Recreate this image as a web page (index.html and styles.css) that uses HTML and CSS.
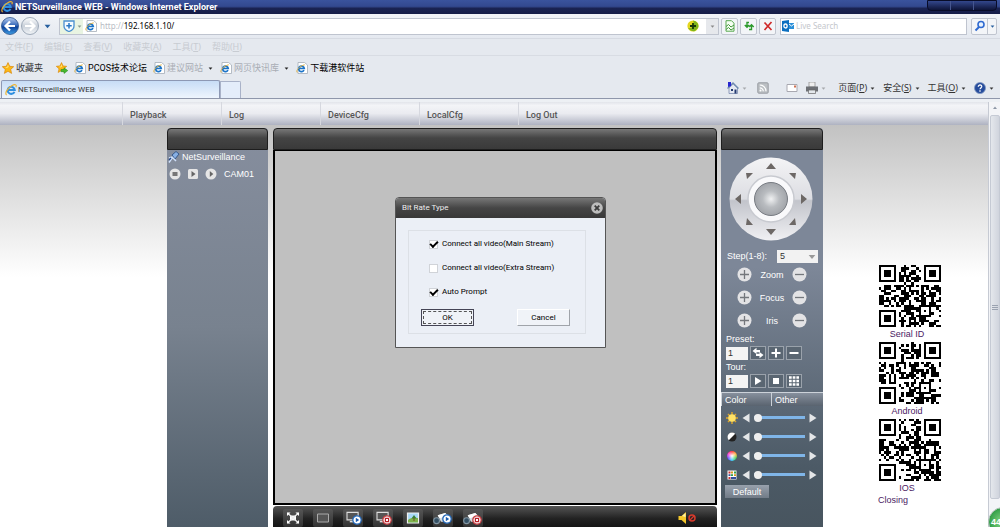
FILE: index.html
```html
<!DOCTYPE html>
<html lang="zh-CN">
<head>
<meta charset="utf-8">
<title>NETSurveillance WEB</title>
<link rel="stylesheet" href="styles.css">
</head>
<body>
<svg class="defs" aria-hidden="true">
  <defs>
    <linearGradient id="g-blue" x1="0" y1="0" x2="0" y2="1"><stop offset="0" stop-color="#b9cdf0"/><stop offset=".5" stop-color="#2a5fb4"/><stop offset=".55" stop-color="#0c3f98"/><stop offset="1" stop-color="#3fa0e6"/></linearGradient>
    <linearGradient id="g-pale" x1="0" y1="0" x2="0" y2="1"><stop offset="0" stop-color="#fff"/><stop offset=".5" stop-color="#c9d0da"/><stop offset="1" stop-color="#f2f5f8"/></linearGradient>
    <linearGradient id="g-ring" x1="0" y1="0" x2="0" y2="1"><stop offset="0" stop-color="#f4f4f6"/><stop offset=".5" stop-color="#dcdde2"/><stop offset=".52" stop-color="#c2c4cb"/><stop offset="1" stop-color="#f0f0f3"/></linearGradient>
    <radialGradient id="g-ball"><stop offset="0" stop-color="#f0f1f2"/><stop offset=".5" stop-color="#b9bcc0"/><stop offset="1" stop-color="#a2a5aa"/></radialGradient>
    <radialGradient id="g-green"><stop offset="0" stop-color="#8fdc8c"/><stop offset="1" stop-color="#2f9c45"/></radialGradient>
    <symbol id="ie" viewBox="0 0 16 16"><path d="M12.6 10.4A4.7 4.7 0 1 1 13 8H4.5" fill="none" stroke="#2f8fe0" stroke-width="2.7"/><path d="M2.2 14.6C-1 13 3.500 5 9 2.300 13-.2 16.300.5 14.500 4.200" fill="none" stroke="#eeb42f" stroke-width="1.500"/></symbol>
    <symbol id="iepage" viewBox="0 0 12 12"><path d="M2 .5h6.500L11.500 3v8.500H2z" fill="#fff" stroke="#a5adb8" stroke-width=".8"/><path d="M8 8.200A2.800 2.800 0 1 1 8.300 6.500H3.500" fill="none" stroke="#1c74c8" stroke-width="1.700"/><path d="M1.300 10.500C-.5 9 3 4 8.700 2.800" fill="none" stroke="#e0b040"/></symbol>
    <symbol id="star" viewBox="0 0 12 12"><path d="M6 .6 7.700 4.300l4 .4-3 2.700.9 4L6 9.300l-3.600 2.100.9-4-3-2.700 4-.4z" fill="#fdb813" stroke="#d8860b" stroke-width=".7"/><path d="M6 2.300 6.800 5 5 6 3 5.200 5.200 4.800z" fill="#ffe27a"/></symbol>
    <symbol id="down" viewBox="0 0 6 4"><path d="M.5.500h5L3 3.500z" fill="currentColor"/></symbol>
    <symbol id="left" viewBox="0 0 8 10"><path d="M7.500.500v9L.5 5z" fill="#e4e6e8"/></symbol>
    <symbol id="right" viewBox="0 0 8 10"><path d="M.5.500v9L7.500 5z" fill="#e4e6e8"/></symbol>
    <symbol id="plus" viewBox="0 0 15 15"><circle cx="7.500" cy="7.500" r="7" fill="#e3e3e5"/><path d="M3 7.500h9M7.500 3v9" stroke="#74777c" stroke-width="1.300"/></symbol>
    <symbol id="minus" viewBox="0 0 15 15"><circle cx="7.500" cy="7.500" r="7" fill="#e3e3e5"/><path d="M3 7.500h9" stroke="#74777c" stroke-width="1.300"/></symbol>
    <symbol id="playdot" viewBox="0 0 10 10"><circle cx="5" cy="5" r="4.200" fill="#fff" stroke="#2468b8" stroke-width="1.300"/><path d="M3.800 2.800v4.400L7.200 5z" fill="#1b5db0"/></symbol>
    <symbol id="stopdot" viewBox="0 0 10 10"><circle cx="5" cy="5" r="4.200" fill="#fff" stroke="#c43c40" stroke-width="1.300"/><path d="M3.400 3.400h3.200v3.200H3.400z" fill="#fff" stroke="#b82028" stroke-width="1.200"/></symbol>
    <symbol id="screen" viewBox="0 0 16 14"><path d="M1 1.500h12v8H1z" fill="#555" stroke="#ddd" stroke-width="1.200"/><path d="M4 11.500h7" stroke="#ddd" stroke-width="1.500"/></symbol>
    <symbol id="cam" viewBox="0 0 16 12"><path d="M4 3 11 1l4 4-2 4H7z" fill="#d5dbe0"/><path d="M4 3 11 1l2 2-7 3z" fill="#fff"/><circle cx="3" cy="8" r="2.700" fill="#345064" stroke="#8295a2"/></symbol>
  </defs>
</svg>

<header class="titlebar">
  <svg class="i12"><use href="#ie"/></svg><span class="title">NETSurveillance WEB - Windows Internet Explorer</span>
  <span class="winbtns"><button aria-label="Minimize"></button><button aria-label="Maximize"></button><button aria-label="Close window"></button></span>
</header>

<form class="addressbar">
  <button type="button" class="bare" aria-label="Back"><svg class="i18" viewBox="0 0 18 18"><circle cx="9" cy="9" r="8.500" fill="url(#g-blue)" stroke="#28508c" stroke-width=".8"/><path d="M9 4.500 4.500 9 9 13.500M5 9h9" fill="none" stroke="#fff" stroke-width="2.200"/></svg></button>
  <button type="button" class="bare" aria-label="Forward"><svg class="i18" viewBox="0 0 18 18"><circle cx="9" cy="9" r="8.500" fill="url(#g-pale)" stroke="#8a98aa" stroke-width=".8"/><path d="m9 4.500 4.500 4.500L9 13.500M13 9H4" fill="none" stroke="#fff" stroke-width="2.200"/></svg></button>
  <button type="button" class="bare hist" aria-label="Recent pages"><svg class="tri"><use href="#down"/></svg></button>
  <div class="urlbox">
    <span class="shield"><svg class="i12" viewBox="0 0 12 12"><path d="M1 1h10v5c0 3-2 4.500-5 5.500C3 10.500 1 9 1 6z" fill="#f4fbff" stroke="#4a90d0" stroke-width="1.300"/><path d="M6 3v5.500M3.300 5.700h5.400" stroke="#2878c4" stroke-width="1.500"/></svg><svg class="caret"><use href="#down"/></svg></span>
    <svg class="i12"><use href="#iepage"/></svg>
    <label class="url"><span>http://</span><input aria-label="Address" value="192.168.1.10/"></label>
    <svg class="i12" viewBox="0 0 12 12"><circle cx="6" cy="6" r="5.600" fill="#e4d61f"/><path d="M6 .5a5.500 5.500 0 0 1 5 7.500L8 11C4 12 2 9 1 8c5 1 7-3 5-7.500z" fill="#7fb51d"/><path d="M6 3v6M3 6h6" stroke="#173809" stroke-width="1.800"/></svg>
    <button type="button" class="drop" aria-label="Show addresses"><svg class="caret"><use href="#down"/></svg></button>
  </div>
  <button type="button" class="tool" aria-label="Compatibility view"><svg class="i12" viewBox="0 0 12 12"><path d="M2 .700h5.500l2.500 2.500v8H2z" fill="#f5fff2" stroke="#58a850"/><path d="M2 6.500 4.500 4.500 7 7l3-2M2 9.500l2.500-2L7 10l3-2" stroke="#42953c" fill="none"/></svg></button>
  <button type="button" class="tool" aria-label="Refresh"><svg class="i12" viewBox="0 0 12 12"><path d="M6 2.500H4V7M1.800 5 4 7.300 6.200 5M6 9.500h2.500V5M6.300 7 8.500 4.700 10.700 7" fill="none" stroke="#2b9a2b" stroke-width="1.400"/></svg></button>
  <button type="button" class="tool" aria-label="Stop loading"><svg class="i12" viewBox="0 0 12 12"><path d="m2.500 2.500 7 7.500M9.500 2l-7 8" stroke="#cf2a2a" stroke-width="1.700"/></svg></button>
  <div class="searchbox">
    <svg class="i12" viewBox="0 0 12 12"><path d="M0 1 7 0v12L0 11z" fill="#0b6fc0"/><path d="M7 3h5v6H7z" fill="#2b8fd8"/><path d="m7 4 2.500 2L12 4" fill="none" stroke="#fff"/><ellipse cx="3.500" cy="6" rx="1.600" ry="2" fill="none" stroke="#fff" stroke-width="1.300"/></svg>
    <input aria-label="Search" placeholder="Live Search">
  </div>
  <span class="go"><button type="button" aria-label="Search"><svg class="i12" viewBox="0 0 12 12"><circle cx="7" cy="4.500" r="3" fill="#e9f3ff" stroke="#2f6ad0" stroke-width="1.600"/><path d="M5 7 1.500 10.500" stroke="#2f6ad0" stroke-width="2"/></svg></button><button type="button" aria-label="Search options"><svg class="caret"><use href="#down"/></svg></button></span>
</form>

<nav class="menubar"><a href="#">文件(<u>F</u>)</a><a href="#">编辑(<u>E</u>)</a><a href="#">查看(<u>V</u>)</a><a href="#">收藏夹(<u>A</u>)</a><a href="#">工具(<u>T</u>)</a><a href="#">帮助(<u>H</u>)</a></nav>

<nav class="favbar">
  <a href="#" class="favs"><svg class="i12"><use href="#star"/></svg>收藏夹</a>
  <a href="#" aria-label="Add favorite"><svg class="i12" viewBox="0 0 12 12"><use href="#star" width="11" height="11"/><path d="M5 7.500h3V5.800L11.800 8.600 8 11.500V9.700H5z" fill="#48b82f" stroke="#1d8a1d" stroke-width=".5"/></svg></a>
  <a href="#" class="on"><svg class="i12"><use href="#iepage"/></svg>PCOS技术论坛</a>
  <a href="#" class="dim"><svg class="i12"><use href="#iepage"/></svg>建议网站<svg class="caret"><use href="#down"/></svg></a>
  <a href="#" class="dim"><svg class="i12"><use href="#iepage"/></svg>网页快讯库<svg class="caret"><use href="#down"/></svg></a>
  <a href="#" class="on"><svg class="i12"><use href="#iepage"/></svg>下载港软件站</a>
</nav>

<div class="tabrow">
  <a href="#" class="tab"><svg class="i12"><use href="#ie"/></svg>NETSurveillance WEB</a>
  <button class="newtab" aria-label="New tab"></button>
  <div class="commands">
    <button aria-label="Home"><svg class="i12" viewBox="0 0 12 12"><path d="M2 6v5.500h8.500V6L6.200 2z" fill="#e5e9f2" stroke="#6d7fa8" stroke-width=".7"/><path d="M.5 6.500 6 1l5.500 5.500" fill="none" stroke="#6f8ab0" stroke-width="1.300"/><path d="M1 0h3v4L1 5z" fill="#2626d0"/><path d="M4 7h2v2H4zM7.500 7.500h2v4h-2z" fill="#243a70"/></svg><svg class="caret pale"><use href="#down"/></svg></button>
    <button aria-label="Feeds" class="feeds"><svg class="i12" viewBox="0 0 12 12"><rect x=".8" y=".8" width="10.400" height="10.400" rx="1" fill="#bcc0c4" stroke="#989ca2"/><path d="M2.800 5.800a3.500 3.500 0 0 1 3.500 3.500M2.800 3a6.200 6.200 0 0 1 6.200 6.300" fill="none" stroke="#fff" stroke-width="1.200"/><circle cx="3.500" cy="8.600" r="1" fill="#fff"/></svg></button>
    <button aria-label="Mail" class="mail"><svg class="i12" viewBox="0 0 12 12"><path d="M1 2.500h10v7H1z" fill="#fff" stroke="#a8a8b0"/><path d="M8 3.500h2v2H8z" fill="#d07050"/></svg></button>
    <button aria-label="Print" class="print"><svg class="i12" viewBox="0 0 12 12"><path d="M3 0h6v5H3z" fill="#eee" stroke="#888" stroke-width=".7"/><path d="M0 4.500h12v5H0z" fill="#6d7075"/><path d="M2.500 8h7v3.500h-7z" fill="#e4e8ec" stroke="#666" stroke-width=".7"/></svg><svg class="caret pale"><use href="#down"/></svg></button>
    <button><span>页面(<u>P</u>)</span><svg class="caret"><use href="#down"/></svg></button>
    <button><span>安全(<u>S</u>)</span><svg class="caret"><use href="#down"/></svg></button>
    <button><span>工具(<u>O</u>)</span><svg class="caret"><use href="#down"/></svg></button>
    <button aria-label="Help"><svg class="i12" viewBox="0 0 12 12"><circle cx="6" cy="6" r="5.500" fill="#264c9c" stroke="#7d95c0" stroke-width=".8"/><path d="M4.300 4.700C4.300 2.300 8 2.500 7.700 4.700 7.500 5.900 6 6 6 7.300M6 8.300v1.400" fill="none" stroke="#fff" stroke-width="1.300"/></svg><svg class="caret"><use href="#down"/></svg></button>
  </div>
</div>

<div class="viewport">
  <div class="page">
    <nav class="sitenav"><a href="#">Playback</a><a href="#">Log</a><a href="#">DeviceCfg</a><a href="#">LocalCfg</a><a href="#">Log Out</a></nav>
    <main class="board">
      <section class="panel devices">
        <div class="cap"></div>
        <div class="root"><svg class="i12" viewBox="0 0 12 12"><path d="M4 4 8 .5l3 2.500-4 5z" fill="#88b0e4" stroke="#24487c" stroke-width=".8"/><path d="m1 7 3-1 4 4M4 7l-3 4.500" fill="none" stroke="#cfe0fa" stroke-width="1.500"/><path d="m1 9 2-2" stroke="#234688" stroke-width="1.500"/></svg>NetSurveillance</div>
        <div class="cam">
          <button class="bare" aria-label="Stop"><svg class="i12" viewBox="0 0 12 12"><circle cx="6" cy="6" r="5.500" fill="#e6e6e6"/><path d="M3.500 4h5v4h-5z" fill="#777"/></svg></button>
          <button class="bare" aria-label="Main stream"><svg class="i12" viewBox="0 0 12 12"><rect x="1" y="1" width="10" height="10" rx="1.500" fill="#e6e6e6"/><path d="M4.500 3v6L8.500 6z" fill="#666"/></svg></button>
          <button class="bare" aria-label="Extra stream"><svg class="i12" viewBox="0 0 12 12"><circle cx="6" cy="6" r="5.500" fill="#e6e6e6"/><path d="M4.800 3v6L8.300 6z" fill="#666"/></svg></button>
          <span>CAM01</span>
        </div>
      </section>

      <section class="center">
        <div class="cap"></div>
        <div class="video">
          <form class="dialog" role="dialog" aria-labelledby="dlg">
            <div class="dlghead"><span id="dlg">Bit Rate Type</span><button type="button" class="bare" aria-label="Close"><svg class="i12" viewBox="0 0 12 12"><circle cx="6" cy="6" r="5.800" fill="#bdbdbd"/><path d="m3.700 3.700 4.600 4.600m0-4.600L3.700 8.300" stroke="#3c3c3c" stroke-width="1.800"/></svg></button></div>
            <div class="dlgbody">
              <label><input type="checkbox" checked>Connect all video(Main Stream)</label>
              <label><input type="checkbox">Connect all video(Extra Stream)</label>
              <label><input type="checkbox" checked>Auto Prompt</label>
              <div class="actions"><button type="button" class="ok"><span>OK</span></button><button type="button">Cancel</button></div>
            </div>
          </form>
        </div>
        <div class="toolbar">
          <button aria-label="Full screen"><svg viewBox="0 0 20 18"><path d="M7 6.500h6v5H7z" fill="#fff"/><path d="m4.500 4 11 10M15.500 4l-11 10" stroke="#eee" stroke-width="1.300"/><path d="M4 3.500h3.500L4 7zM16 3.500h-3.500L16 7zM4 14.500h3.500L4 11zM16 14.500h-3.500L16 11z" fill="#fff"/></svg></button>
          <button aria-label="Single view"><svg viewBox="0 0 20 18"><path d="M4.500 5h11v8h-11z" fill="#555" stroke="#aaa"/></svg></button>
          <button aria-label="Play all"><svg viewBox="0 0 20 18"><use href="#screen" x="3" y="2" width="15" height="13"/><use href="#playdot" x="9" y="6" width="10" height="10"/></svg></button>
          <button aria-label="Stop all"><svg viewBox="0 0 20 18"><use href="#screen" x="3" y="2" width="15" height="13"/><use href="#stopdot" x="9" y="6" width="10" height="10"/></svg></button>
          <button aria-label="Snapshot"><svg viewBox="0 0 20 18"><path d="M4.500 4h11v10h-11z" fill="#a9d8f6" stroke="#f0f0f0" stroke-width="1.200"/><path d="M5 11c4-3 6-2 10-2v4.500H5z" fill="#7fb24b"/><path d="m11 6 2.500 3.500h-5z" fill="#3a7e32"/><path d="M10.500 9h1v3h-1z" fill="#6f5124"/></svg></button>
          <button aria-label="Start record"><svg viewBox="0 0 20 18"><use href="#cam" x="0" y="3" width="18" height="13"/><use href="#playdot" x="9" y="5" width="10" height="10"/></svg></button>
          <button aria-label="Stop record"><svg viewBox="0 0 20 18"><use href="#cam" x="0" y="3" width="18" height="13"/><use href="#stopdot" x="9" y="6" width="10" height="10"/></svg></button>
          <button aria-label="Sound off" class="sound"><svg viewBox="0 0 20 18"><path d="M1.500 7h3L9 3v12L4.500 11h-3z" fill="#f4c72a"/><path d="M5 7 8.500 4v4z" fill="#fff2a8"/><circle cx="15" cy="9" r="3" fill="none" stroke="#d83a2c" stroke-width="1.500"/><path d="m13 11 4-4" stroke="#d83a2c" stroke-width="1.300"/></svg></button>
        </div>
      </section>

      <section class="panel ptz">
        <div class="cap"></div>
        <svg class="wheel" viewBox="0 0 84 86"><circle cx="42" cy="43" r="41.500" fill="url(#g-ring)"/><circle cx="42" cy="43" r="23" fill="#f9f9fb" stroke="#c8cad0" stroke-width="1.500"/><circle cx="42" cy="43" r="16.500" fill="url(#g-ball)" stroke="#777b82"/><path d="m42 7 5 6H37zM42 79l5-6H37zM6 43l6-5v10zM78 43l-6-5v10zM17 17h7l-6 6zM67 17h-7l6 6zM17 69h7l-6-7zM67 69h-7l6-7z" fill="#6d6866"/></svg>
        <div class="step"><label for="step">Step(1-8):</label><span class="select"><select id="step"><option>5</option></select><svg class="caret"><use href="#down"/></svg></span></div>
        <div class="lens"><button class="bare" aria-label="Zoom in"><svg><use href="#plus"/></svg></button><span>Zoom</span><button class="bare" aria-label="Zoom out"><svg><use href="#minus"/></svg></button></div>
        <div class="lens"><button class="bare" aria-label="Focus in"><svg><use href="#plus"/></svg></button><span>Focus</span><button class="bare" aria-label="Focus out"><svg><use href="#minus"/></svg></button></div>
        <div class="lens"><button class="bare" aria-label="Iris open"><svg><use href="#plus"/></svg></button><span>Iris</span><button class="bare" aria-label="Iris close"><svg><use href="#minus"/></svg></button></div>
        <label class="name" for="preset">Preset:</label>
        <div class="numrow"><input id="preset" value="1">
          <button aria-label="Go to preset"><svg viewBox="0 0 14 12"><path d="M1.500 4 5.500.8V3H9v2.200H5.500V7zM12.500 8 8.500 11.200V9H5V6.800h3.500V5z" fill="#fff"/></svg></button>
          <button aria-label="Add preset"><svg viewBox="0 0 14 12"><path d="M7 1.500v9M2.500 6h9" stroke="#fff" stroke-width="2"/></svg></button>
          <button aria-label="Delete preset"><svg viewBox="0 0 14 12"><path d="M2.500 6h9" stroke="#fff" stroke-width="2"/></svg></button></div>
        <label class="name" for="tour">Tour:</label>
        <div class="numrow"><input id="tour" value="1">
          <button aria-label="Start tour"><svg viewBox="0 0 14 12"><path d="M4 2v8l6.500-4z" fill="#fff"/></svg></button>
          <button aria-label="Stop tour"><svg viewBox="0 0 14 12"><path d="M4 3h6v6H4z" fill="#fff"/></svg></button>
          <button aria-label="Edit tour"><svg viewBox="0 0 14 12"><path d="M2 2.500h10M2 6h10M2 9.500h10" stroke="#fff" stroke-width="2.500" stroke-dasharray="2.700 1"/></svg></button></div>
        <div class="ctabs"><button>Color</button><button>Other</button></div>
        <div class="adjust"><svg class="i12" viewBox="0 0 12 12"><path d="M6 0v12M0 6h12M2 2l8 8M10 2l-8 8" stroke="#d9a42e" stroke-width="1.500"/><circle cx="6" cy="6" r="3.800" fill="#ffe266"/></svg><button class="bare" aria-label="Less brightness"><svg><use href="#left"/></svg></button><input type="range" value="0" aria-label="Brightness"><button class="bare" aria-label="More brightness"><svg><use href="#right"/></svg></button></div>
        <div class="adjust"><svg class="i12" viewBox="0 0 12 12"><circle cx="6" cy="6" r="4.500" fill="#222"/><path d="M2.800 9.200A4.500 4.500 0 0 1 9.200 2.800z" fill="#fff"/></svg><button class="bare" aria-label="Less contrast"><svg><use href="#left"/></svg></button><input type="range" value="0" aria-label="Contrast"><button class="bare" aria-label="More contrast"><svg><use href="#right"/></svg></button></div>
        <div class="adjust"><span class="hue"></span><button class="bare" aria-label="Less saturation"><svg><use href="#left"/></svg></button><input type="range" value="0" aria-label="Saturation"><button class="bare" aria-label="More saturation"><svg><use href="#right"/></svg></button></div>
        <div class="adjust"><svg class="i12" viewBox="0 0 12 12"><path d="M1.500 1.500h9v9h-9z" fill="#fff"/><path d="M2.500 3.500h2M2.500 9h2" stroke="#c33" stroke-width="1.800"/><path d="M5 3.500h2M8 6.200h2" stroke="#d99a20" stroke-width="1.800"/><path d="M8 3.500h2M5 6.200h2" stroke="#35a04a" stroke-width="1.800"/><path d="M2.500 6.200h2M5 9h5" stroke="#334f9c" stroke-width="1.800"/></svg><button class="bare" aria-label="Less hue"><svg><use href="#left"/></svg></button><input type="range" value="0" aria-label="Hue"><button class="bare" aria-label="More hue"><svg><use href="#right"/></svg></button></div>
        <button class="default">Default</button>
      </section>

      <aside class="codes">
        <figure><svg class="qr" data-seed="11"></svg><figcaption><a href="#">Serial ID</a></figcaption></figure>
        <figure><svg class="qr" data-seed="29"></svg><figcaption><a href="#">Android</a></figcaption></figure>
        <figure><svg class="qr" data-seed="53"></svg><figcaption><a href="#">IOS</a></figcaption></figure>
        <a href="#" class="closing">Closing</a>
      </aside>
    </main>
  </div>
  <div class="scroll"><svg class="i12" viewBox="0 0 12 12"><path d="M4 7h4L6 4.500z" fill="#8d96a5"/></svg><div class="thumb"><i></i><i></i><i></i></div><svg class="badge" viewBox="0 0 30 30"><circle cx="15" cy="15" r="14.500" fill="url(#g-green)" stroke="#b8c4be"/><text x="3" y="18">44</text></svg></div>
</div>
<script src="qr.js"></script>
</body>
</html>
```
FILE: styles.css
```css
* { box-sizing: border-box; }
body { margin: 0; height: 100vh; display: flex; flex-direction: column; overflow: hidden; background: #e5e9ef; color: #222; font: 9px/12px "Noto Sans", "Noto Sans CJK SC", sans-serif; }
a { color: inherit; text-decoration: none; }
button, input, select { font: inherit; color: inherit; margin: 0; padding: 0; border: 0; border-radius: 0; outline: 0; min-width: 0; }
button { background: none; display: flex; align-items: center; justify-content: center; }
svg { display: block; flex: none; }
.defs { position: absolute; width: 0; height: 0; }
.i12 { width: 12px; height: 12px; }
.i18 { width: 18px; height: 18px; }
.caret { width: 5px; height: 3px; }
.pale { opacity: .35; }

.titlebar { height: 14px; flex: none; display: flex; align-items: center; gap: 2px; padding-left: 1px; background: linear-gradient(#3a539d, #33498f 45%, #1a2352 60%, #151c47); color: #fff; }
.title { font: bold 9px/12px Roboto, sans-serif; }
.winbtns { margin: 0 3px 0 auto; align-self: flex-start; display: flex; width: 70px; height: 11px; border: 1px solid #080c28; border-radius: 0 0 4px 4px; background: linear-gradient(#33478c, #0e1438); }
.winbtns button { flex: 1; border-right: 1px solid #46568f; }
.winbtns button:last-child { border: 0; }

.addressbar { height: 25px; flex: none; display: flex; align-items: center; gap: 2px; padding: 0 3px 0 1px; background: linear-gradient(#f1f3f7, #e5e9f0); border-bottom: 1px solid #d6dae2; }
.hist { width: 13px; color: #275f9e; }
.tri { width: 7px; height: 5px; }
.urlbox { flex: 1; display: flex; align-items: center; height: 17px; margin-left: 3px; background: #fff; border: 1px solid #bfc4cf; gap: 2px; font-size: 8px; }
.shield { display: flex; align-items: center; gap: 2px; width: 23px; height: 15px; padding-left: 3px; background: #e9f4e2; color: #8a9a90; }
.url { flex: 1; display: flex; margin-left: 1px; color: #b8bcc4; }
.url input { flex: 1; color: #000; background: none; }
.drop { width: 12px; height: 15px; margin-left: 5px; background: #e6e8ec; color: #888; }
.tool { width: 17px; height: 17px; border: 1px solid #c0c5cf; border-radius: 2px; background: #f3f5f8; }
.searchbox { width: 187px; height: 17px; margin-left: 2px; display: flex; align-items: center; gap: 2px; padding-left: 1px; background: #fff; border: 1px solid #bfc4cf; font-size: 8px; }
.searchbox input { flex: 1; background: none; }
.searchbox input::placeholder { color: #c4c7cc; opacity: 1; }
.go { display: flex; width: 26px; height: 17px; margin-left: 2px; border: 1px solid #c0c5cf; border-radius: 2px; background: #f3f5f8; color: #275f9e; }
.go button { width: 16px; }
.go button + button { width: 9px; border-left: 1px solid #c0c5cf; }

.menubar { height: 17px; flex: none; display: flex; gap: 11px; align-items: center; padding-left: 5px; color: #c8ccd2; border-bottom: 1px solid #d8dce3; }
.favbar { height: 24px; flex: none; display: flex; gap: 6px; align-items: center; padding-left: 2px; font-family: Roboto, "Noto Sans CJK SC", sans-serif; }
.favbar a { display: flex; align-items: center; gap: 2px; color: #333; }
.favbar .favs { margin-right: 7px; }
.favbar .on { color: #000; }
.favbar .dim { color: #a9adb5; }
.dim .caret { color: #222; margin: 0 1px 0 3px; }

.tabrow { height: 19px; flex: none; display: flex; align-items: flex-end; padding-left: 1px; border-bottom: 1px solid #8f97ab; }
.tab { width: 219px; height: 18px; display: flex; align-items: center; gap: 1px; padding-left: 3px; border: 1px solid #8d98b4; border-bottom: 0; border-radius: 2px 2px 0 0; background: linear-gradient(#c7dcf6, #eef5fd); font: 8px/12px Roboto, sans-serif; color: #333; }
.newtab { width: 21px; height: 17px; border: 1px solid #a9b2c8; border-bottom: 0; border-radius: 0 2px 0 0; background: #e4edfa; }
.commands { margin-left: auto; display: flex; align-items: center; gap: 8px; height: 20px; padding-right: 6px; color: #333; }
.commands button { gap: 3px; }
.feeds { margin-left: 2px; }
.mail { margin-left: 9px; }
.print { margin-right: 4px; }

.viewport { flex: 1; min-height: 0; display: flex; padding-top: 3px; background: #edf0f4; }
.page { flex: 1; min-width: 0; display: flex; flex-direction: column; background: linear-gradient(#c2c2c2, #c2c2c2 23px, #fff 175px); }
.sitenav { height: 23px; flex: none; display: flex; padding-left: 122px; background: linear-gradient(#e2e4ea, #f3f4f7 15%, #eaebf0 50%, #aeb2c1); font: 500 9px/26px Roboto, sans-serif; color: #555; }
.sitenav a { width: 99px; padding-left: 7px; border-left: 1px solid #d6d8df; }
.board { flex: 1; min-height: 0; display: grid; grid-template-columns: 101px minmax(0, 1fr) 102px 161px; column-gap: 4px; padding: 3px 0 0 167px; }
.cap { height: 22px; flex: none; border: 1px solid #1e1e1e; border-radius: 4px 4px 0 0; background: linear-gradient(#777, #444 45%, #3a3a3a); }
.panel { color: #fff; background: linear-gradient(#7d8798, #7d8798 35%, #4c5a66 85%, #48555f); font: 9px/12px "Liberation Sans", Arial, sans-serif; border-radius: 4px 4px 0 0; }
.bare { background: none; }
.devices { background: linear-gradient(#868e9e, #78828f 50%, #4e5c68); }
.root { display: flex; align-items: center; gap: 2px; padding: 1px; }
.cam { display: flex; align-items: center; gap: 6px; padding: 4px 2px; }
.cam span { margin-left: 1px; }

.center { display: flex; flex-direction: column; margin-left: 1px; }
.video { flex: 1; position: relative; border: 2px solid #000; border-top-width: 1px; background: #c0c0c0; }
.dialog { position: absolute; left: 120px; top: 46px; width: 211px; border: 1px solid #555; border-radius: 4px 4px 0 0; background: #ebeff6; font: 8px/12px Roboto, sans-serif; color: #000; }
.dlghead { display: flex; align-items: center; justify-content: space-between; height: 20px; padding: 0 2px 0 6px; border-radius: 3px 3px 0 0; background: linear-gradient(#777, #454545 50%, #383838); color: #eee; }
.dlgbody { margin: 12px 19px 13px 12px; border: 1px solid #dce0e6; padding: 1px 0 7px 20px; }
.dlgbody label { display: flex; align-items: center; gap: 4px; height: 24px; }
.dlgbody [type=checkbox] { appearance: none; width: 9px; height: 9px; background: #fff; border: 1px solid #d0d3d8; display: grid; place-items: center; }
.dlgbody [type=checkbox]:checked::before { content: ""; width: 6px; height: 3px; border: solid #000; border-width: 0 0 2px 2px; rotate: -45deg; margin-top: -2px; }
.actions { display: flex; justify-content: space-between; margin: 5px 15px 0 -8px; }
.actions button { width: 53px; height: 17px; background: #f0f3f8; border: 1px solid; border-color: #fff #a0a4aa #a0a4aa #fff; }
.actions .ok { border-color: #445; }
.ok span { flex: 1; margin: 1px; height: 13px; line-height: 11px; border: 1px dashed #555; }

.toolbar { height: 21px; flex: none; display: flex; gap: 10px; align-items: center; margin-top: 1px; padding: 2px 20px 0 10px; border-radius: 4px 4px 0 0; background: linear-gradient(#555, #222 60%, #151515); }
.toolbar button { width: 20px; height: 18px; border-radius: 2px; background: linear-gradient(#555, #333); }
.toolbar svg { width: 20px; height: 18px; }
.toolbar .sound { margin-left: auto; background: none; }

.ptz { display: flex; flex-direction: column; align-items: stretch; }
.wheel { width: 84px; height: 86px; margin: 6px auto 7px 8px; }
.step { display: flex; align-items: center; justify-content: space-between; padding: 0 5px 0 6px; height: 14px; margin-bottom: 4px; }
.select { position: relative; width: 41px; height: 13px; background: #f2f2f2; color: #333; }
.select select { appearance: none; width: 100%; height: 13px; padding-left: 3px; background: none; }
.select .caret { position: absolute; right: 2px; top: 4px; width: 8px; height: 6px; color: #999; }
.lens { display: flex; align-items: center; justify-content: space-between; padding: 0 16px; height: 15px; margin-bottom: 8px; }
.lens svg { width: 15px; height: 15px; }
.name { padding-left: 5px; margin-top: -3px; }
.numrow { display: flex; gap: 2px; align-items: center; padding: 1px 6px 4px 5px; height: 19px; }
.numrow input { width: 22px; height: 13px; background: #f4f4f4; color: #333; padding-left: 2px; }
.numrow button { width: 16px; height: 14px; border: 1px solid #9aa2ab; background: #5a6672; }
.numrow svg { width: 14px; height: 12px; }
.ctabs { display: flex; margin-bottom: 2px; }
.ctabs button { width: 50px; height: 14px; justify-content: flex-start; padding-left: 3px; border-top: 1px solid #ccd2d9; border-left: 1px solid #ccd2d9; background: linear-gradient(#87909d, #59636f); }
.ctabs button:last-child { flex: 1; }
.adjust { display: flex; align-items: center; gap: 4px; height: 19px; padding: 0 6px 0 5px; }
.adjust button svg { width: 8px; height: 10px; }
.adjust input { appearance: none; flex: 1; width: 0; height: 8px; background: linear-gradient(#7fb5e8, #7fb5e8) center / 100% 3px no-repeat; }
.adjust input::-webkit-slider-thumb { appearance: none; width: 8px; height: 8px; border-radius: 50%; background: #eee; }
.hue { width: 10px; height: 10px; margin: 0 1px; border-radius: 50%; background: radial-gradient(#fff, #fff0 70%), conic-gradient(#f33, #fa3, #4c4, #3cf, #64f, #f3c, #f33); }
.default { align-self: flex-start; width: 44px; height: 13px; margin: 1px 0 0 4px; background: linear-gradient(#98a1ad, #717b87); }

.codes { margin-left: -4px; padding: 137px 0 0 56px; font: 9px/12px "Liberation Sans", Arial, sans-serif; color: #4b1a63; }
.codes figure { margin: 0; width: 62px; }
.codes figcaption { text-align: center; height: 15px; line-height: 15px; padding-right: 6px; }
.qr { width: 62px; height: 62px; }
.closing { display: block; margin-left: -1px; line-height: 8px; }

.scroll { position: relative; width: 12px; flex: none; display: flex; flex-direction: column; background: #f3f4f7; border-left: 1px solid #c6cad3; }
.thumb { flex: 1; margin: 1px 0 28px 1px; border: 1px solid #c5cad4; border-radius: 2px; background: linear-gradient(90deg, #e4e7ec, #d0d4dd); display: flex; flex-direction: column; justify-content: center; align-items: center; gap: 1px; }
.thumb i { width: 6px; height: 1px; background: #9aa2b0; }
.badge { position: absolute; left: -1px; bottom: -10px; width: 30px; height: 30px; }
.badge text { font: bold 9px "Liberation Sans", sans-serif; fill: #fff; }
```
FILE: qr.js
```js
const SIZE = 25;

function finder(x, y) {
  const d = Math.max(Math.abs(x - 3), Math.abs(y - 3));
  return d !== 2 && d <= 3;
}

function isDark(x, y, rand) {
  if (x < 8 && y < 8) return finder(x, y);
  if (x >= SIZE - 8 && y < 8) return finder(x - (SIZE - 7), y);
  if (x < 8 && y >= SIZE - 8) return finder(x, y - (SIZE - 7));
  const d = Math.max(Math.abs(x - 18), Math.abs(y - 18));
  if (d <= 2) return d !== 1;
  return rand() > 0.48;
}

document.querySelectorAll('.qr').forEach((svg) => {
  let seed = Number(svg.dataset.seed);
  const rand = () => (seed = (seed * 16807) % 2147483647) / 2147483647;
  for (let i = 0; i < 9; i++) rand();
  let d = '';
  for (let y = 0; y < SIZE; y++) {
    for (let x = 0; x < SIZE; x++) {
      if (isDark(x, y, rand)) d += `M${x} ${y}h1v1h-1z`;
    }
  }
  const path = document.createElementNS('http://www.w3.org/2000/svg', 'path');
  path.setAttribute('d', d);
  svg.setAttribute('viewBox', `0 0 ${SIZE} ${SIZE}`);
  svg.setAttribute('shape-rendering', 'crispEdges');
  svg.append(path);
});
```
